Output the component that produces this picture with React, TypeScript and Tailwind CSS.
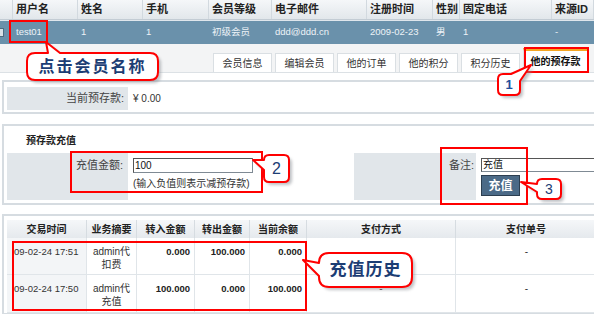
const font = "font-['Liberation_Sans','Noto_Sans_CJK_SC',sans-serif]";

const topHeaders = ["", "用户名", "姓名", "手机", "会员等级", "电子邮件", "注册时间", "性别", "固定电话", "来源ID"];
const topRow = ["", "test01", "1", "1", "初级会员", "ddd@ddd.cn", "2009-02-23", "男", "1", "-"];

const tabs = ["会员信息", "编辑会员", "他的订单", "他的积分", "积分历史"];

const histHeaders = ["交易时间", "业务摘要", "转入金额", "转出金额", "当前余额", "支付方式", "支付单号"];
const histRows = [
  { time: "09-02-24 17:51", memo: ["admin代", "扣费"], inAmt: "0.000", outAmt: "100.000", bal: "0.000" },
  { time: "09-02-24 17:50", memo: ["admin代", "充值"], inAmt: "100.000", outAmt: "0.000", bal: "100.000" },
];

function Annotations() {
  const red = "#ff0000";
  const bubbles = [
    "M35,53 H48 L46,42 L60,53 H150 Q158,53 158,61 V72 Q158,80 150,80 H35 Q27,80 27,72 V61 Q27,53 35,53 Z",
    "M503,74 H511 L531,65 L520,81 V90 Q520,95 515,95 H503 Q498,95 498,90 V79 Q498,74 503,74 Z",
    "M269,155 H284 Q289,155 289,160 V177 Q289,182 284,182 H269 Q264,182 264,177 V170 L253,160 L264,160 Q264,155 269,155 Z",
    "M542,179 H556 Q561,179 561,184 V194 Q561,199 556,199 H542 Q537,199 537,194 V192 L521,182 L537,184 Q537,179 542,179 Z",
    "M329,253 H402 Q412,253 412,263 V277 Q412,287 402,287 H329 Q319,287 319,277 V276 L303,260 L319,263 Q319,253 329,253 Z",
  ];
  return (
    <svg className="absolute inset-0 pointer-events-none" width="594" height="314" viewBox="0 0 594 314">
      <defs>
        <filter id="sh" x="-20%" y="-20%" width="140%" height="160%">
          <feGaussianBlur stdDeviation="1.5" />
        </filter>
      </defs>
      <rect x="10" y="21" width="37" height="21" fill="none" stroke={red} strokeWidth="2" />
      <rect x="525" y="48" width="63" height="24" fill="none" stroke={red} strokeWidth="2" />
      <rect x="71" y="152" width="191" height="40" fill="none" stroke={red} strokeWidth="2" />
      <rect x="441" y="148" width="86" height="56" fill="none" stroke={red} strokeWidth="2" />
      <rect x="13" y="242" width="293" height="68" fill="none" stroke={red} strokeWidth="2" />
      {bubbles.map((d, i) => (
        <g key={i}>
          <path d={d} transform="translate(3,3)" fill="#8a8f94" opacity="0.55" filter="url(#sh)" />
          <path d={d} fill="#ffffff" stroke={red} strokeWidth="2" strokeLinejoin="round" />
        </g>
      ))}
    </svg>
  );
}

function Labels() {
  return (
    <>
      <div className="absolute left-[27px] top-[53px] w-[131px] h-[27px] flex items-center justify-center text-[16px] font-bold text-[#1c3d74] tracking-[2px]">
        点击会员名称
      </div>
      <div className="absolute left-[498px] top-[74px] w-[22px] h-[21px] flex items-center justify-center text-[13px] font-bold text-[#1f4f9c]">
        1
      </div>
      <div className="absolute left-[264px] top-[155px] w-[25px] h-[27px] flex items-center justify-center text-[16px] text-[#1c3d74]">
        2
      </div>
      <div className="absolute left-[537px] top-[179px] w-[24px] h-[20px] flex items-center justify-center text-[14px] text-[#1c3d74]">
        3
      </div>
      <div className="absolute left-[319px] top-[253px] w-[93px] h-[34px] flex items-center justify-center text-[17px] font-bold text-[#1c3d74] tracking-[1px]">
        充值历史
      </div>
    </>
  );
}

export default function App() {
  return (
    <div className={`relative w-[594px] h-[314px] overflow-hidden bg-white text-[#333] ${font}`}>
      {/* member list */}
      <div className="grid grid-cols-[13px_65px_65px_66px_63px_95px_66px_27px_92px_42px] h-[20px] bg-gradient-to-b from-[#f5f7f9] to-[#e2e7eb] border-b border-[#c3ccd4]">
        {topHeaders.map((h, i) => (
          <div key={i} className="flex items-center px-[3px] border-r border-[#d2d9df] text-[11px] font-bold text-[#222] whitespace-nowrap">
            {h}
          </div>
        ))}
      </div>
      <div className="grid grid-cols-[13px_65px_65px_66px_63px_95px_66px_27px_92px_42px] h-[24px] bg-[#6a91ab] border-t border-[#dfe6ec]">
        {topRow.map((c, i) => (
          <div key={i} className="flex items-center px-[3px] text-[9.5px] text-[#eef3f7] whitespace-nowrap">
            {i === 0 ? <span className="ml-[-7px] w-[8px] h-[9px] bg-[#d9e1e7] border border-[#4d6c82]" /> : c}
          </div>
        ))}
      </div>

      {/* tabs */}
      <div className="flex items-end justify-end gap-[3px] pr-[6px] h-[29px] bg-[#f3f4f5] border-b border-[#dce1e5]">
        {tabs.map((t) => (
          <div key={t} className="w-[59px] h-[19px] shrink-0 flex items-center justify-center bg-white border border-b-0 border-[#dadfe3] text-[10px] text-[#333]">
            {t}
          </div>
        ))}
        <div className="w-[65px] h-[24px] shrink-0 flex items-center justify-center bg-white border border-b-0 border-[#dadfe3] border-t-[3px] border-t-[#f5a623] text-[10px] font-bold text-[#111]">
          他的预存款
        </div>
      </div>

      {/* current balance */}
      <div className="mt-[7px] ml-[2px] w-[600px] border-2 border-[#d6dce1] pt-[5px] pb-[2px] px-[3px]">
        <div className="flex h-[23px] text-[11px]">
          <div className="w-[121px] shrink-0 bg-[#e1e6ea] flex items-center justify-end pr-[4px] text-[#444]">当前预存款:</div>
          <div className="flex items-center pl-[5px] text-[10px] text-[#333]">¥ 0.00</div>
        </div>
      </div>

      {/* recharge */}
      <div className="mt-[10px] ml-[2px] w-[600px] border-2 border-[#d6dce1] pt-[8px] pb-[3px] px-[3px]">
        <div className="h-[14px] mb-[5px] pl-[19px] text-[10px] font-bold text-[#222] leading-[14px]">预存款充值</div>
        <div className="flex h-[47px] text-[11px] leading-[14px]">
          <div className="w-[121px] shrink-0 bg-[#e1e6ea] flex justify-end pt-[5px] pr-[5px] text-[#444]">充值金额:</div>
          <div className="w-[226px] shrink-0 pl-[5px] pt-[5px]">
            <div className="w-[120px] h-[15px] border border-[#7f8a94] border-t-[#555] border-l-[#555] bg-white pl-[1px] text-[10px] leading-[13px] text-[#111]">
              100
            </div>
            <div className="mt-[4px] text-[10px] leading-[13px] text-[#333]">(输入负值则表示减预存款)</div>
          </div>
          <div className="w-[122px] shrink-0 bg-[#e1e6ea] flex justify-end pt-[5px] pr-[2px] text-[#444]">备注:</div>
          <div className="shrink-0 pl-[5px] pt-[5px]">
            <div className="w-[130px] h-[14px] border border-[#7f8a94] border-t-[#555] border-l-[#555] bg-white pl-[1px] text-[10px] leading-[12px] text-[#111]">
              充值
            </div>
            <div className="mt-[3px] w-[39px] h-[21px] flex items-center justify-center bg-[#4b6a87] border border-[#2c3e50] text-[12px] font-bold text-white">
              充值
            </div>
          </div>
        </div>
      </div>

      {/* history */}
      <div className="mt-[9px] ml-[2px] w-[600px] border-2 border-[#d6dce1] pt-[4px] px-[3px]">
        <div className="grid grid-cols-[80px_50px_58px_55px_57px_149px_1fr] h-[18px] bg-gradient-to-b from-[#f5f7f9] to-[#e5e9ed]">
          {histHeaders.map((h) => (
            <div key={h} className="flex items-center justify-center border-r border-[#d6dce1] text-[10px] font-bold text-[#222]">
              {h}
            </div>
          ))}
        </div>
        {histRows.map((r, i) => (
          <div key={i} className={`grid grid-cols-[80px_50px_58px_55px_57px_149px_1fr] ${i === 0 ? "h-[37px]" : "h-[38px]"} text-[10px] leading-[13px] text-[#333]`}>
            <div className="bg-[#f3f5f7] border-r border-b border-[#e0e5e9] pl-[7px] pt-[7px] text-[9.5px] whitespace-nowrap">{r.time}</div>
            <div className="border-r border-b border-[#e0e5e9] pt-[7px] text-center">
              <div>{r.memo[0]}</div>
              <div>{r.memo[1]}</div>
            </div>
            <div className="border-r border-b border-[#e0e5e9] pt-[7px] pr-[4px] text-right text-[9.5px] font-bold text-[#222]">{r.inAmt}</div>
            <div className="border-r border-b border-[#e0e5e9] pt-[7px] pr-[4px] text-right text-[9.5px] font-bold text-[#222]">{r.outAmt}</div>
            <div className="border-r border-b border-[#e0e5e9] pt-[7px] pr-[4px] text-right text-[9.5px] font-bold text-[#222]">{r.bal}</div>
            <div className="border-r border-b border-[#e0e5e9] pt-[7px] text-center">-</div>
            <div className="border-b border-[#e0e5e9] pt-[7px] text-center">-</div>
          </div>
        ))}
      </div>

      <Annotations />
      <Labels />
    </div>
  );
}
